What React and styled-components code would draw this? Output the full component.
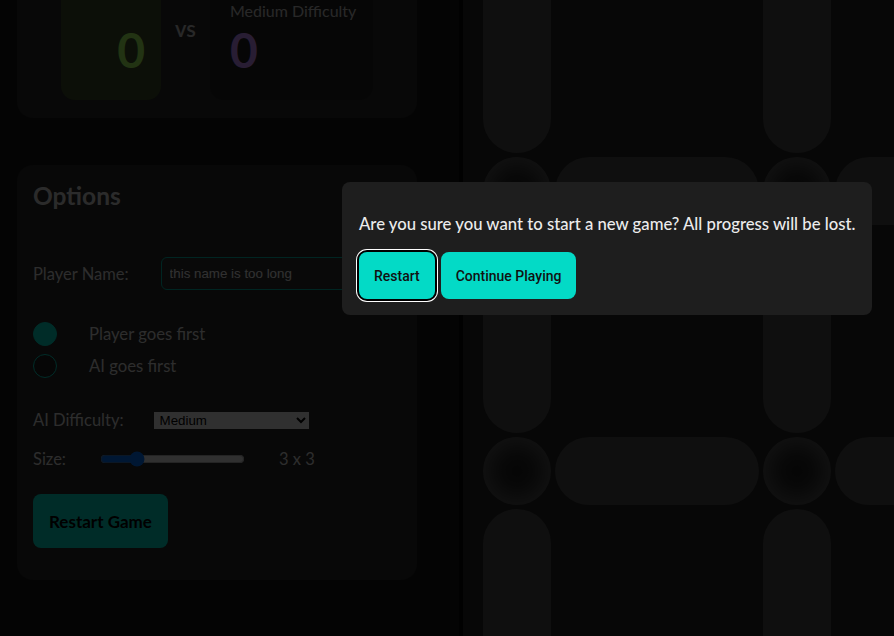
import React from 'react'
import styled, { createGlobalStyle } from 'styled-components'

// page is drawn a little scrolled, with the "new game?" confirm on top

const GlobalStyle = createGlobalStyle`
  html, body {
    margin: 0;
    padding: 0;
    background: #181818;
    overflow: hidden;
  }
  body {
    font-family: Lato, 'Open Sans', sans-serif;
    color: #dedede;
  }
`;

const TEAL = '#03dac6';

const Page = styled.div`
  display: flex;
  height: 636px;
  overflow: hidden;
`;

const Sidebar = styled.aside`
  width: 463px;
  flex-shrink: 0;
  box-sizing: border-box;
  padding: 0 17px;
  border-right: 4px solid #050505;
`;

const SideColumn = styled.div`
  display: flex;
  flex-direction: column;
  gap: 47px;
  margin-top: -37px;
`;

const Card = styled.section`
  width: 400px;
  box-sizing: border-box;
  background: #282828;
  border-radius: 16px;
`;

const ScoreCard = styled(Card)`
  display: flex;
  justify-content: center;
  align-items: flex-start;
  gap: 14px;
  padding: 18px 0;
`;

const ScoreBox = styled.div`
  width: ${p => p.$width}px;
  box-sizing: border-box;
  padding: 20px 16px 20px 20px;
  border-radius: 14px;
  background: ${p => p.$bg};
  text-align: ${p => p.$align};
`;

const ScoreLabel = styled.div`
  font-size: 16px;
  line-height: 19px;
  min-height: 19px;
  color: #c8c8c8;
  white-space: nowrap;
`;

const ScoreValue = styled.div`
  font-size: 48px;
  line-height: 60px;
  font-weight: 700;
  color: ${p => p.$color};
`;

const Versus = styled.div`
  margin-top: 34px;
  font-size: 22px;
  font-weight: 600;
  color: #c8c8c8;
`;

const OptionsCard = styled(Card)`
  display: flex;
  flex-direction: column;
  align-items: flex-start;
  padding: 16px 16px 32px;
`;

const Title = styled.h2`
  margin: 0 0 47px;
  font-size: 24.5px;
  line-height: 29px;
  font-weight: 700;
  color: #d6d6d6;
`;

const Row = styled.div`
  display: flex;
  align-items: center;
  gap: ${p => p.$gap || 32}px;
  height: ${p => p.$h || 24}px;
  margin-bottom: ${p => p.$mb || 0}px;
  font-size: 16.5px;
`;

const NameInput = styled.input`
  width: 200px;
  height: 33px;
  box-sizing: border-box;
  padding: 0 8px;
  border: 1px solid #02b8a8;
  border-radius: 6px;
  background: #2e2e2e;
  color: #f4f4f4;
  font: 13.33px 'Liberation Sans', Arial, sans-serif;
  outline: none;
`;

const RadioGroup = styled.div`
  display: flex;
  flex-direction: column;
  gap: 8px;
  margin-bottom: 30px;
`;

const RadioRow = styled.label`
  display: flex;
  align-items: center;
  gap: 32px;
  height: 24px;
  font-size: 16.7px;
`;

const RadioDot = styled.input.attrs({ type: 'radio' })`
  appearance: none;
  width: 24px;
  height: 24px;
  margin: 0;
  border-radius: 50%;
  box-sizing: border-box;
  border: 1px solid ${TEAL};
  background: #222;
  &:checked {
    background: ${TEAL};
  }
`;

const Select = styled.select`
  width: 155px;
  height: 17px;
  padding: 0 2px;
  border: none;
  border-radius: 0;
  background: #f0f0f0;
  color: #000;
  font: 13.33px 'Liberation Sans', Arial, sans-serif;
`;

const Range = styled.input.attrs({ type: 'range' })`
  width: 145px;
  margin: 0 2px;
`;

const MainButton = styled.button`
  height: 54px;
  padding: 0 16px;
  border: none;
  border-radius: 8px;
  background: ${TEAL};
  color: #000;
  font-family: Lato, sans-serif;
  font-size: 17px;
  font-weight: 700;
`;

const BoardArea = styled.main`
  flex: 1;
  background: #232323;
  overflow: hidden;
  padding-left: 20px;
`;

const Board = styled.div`
  display: grid;
  grid-template-columns: 68px 204px 68px 204px 68px 204px 68px;
  grid-template-rows: 68px 204px 68px 204px 68px 204px 68px;
  gap: 4px;
  margin-top: -123px;
`;

const Dot = styled.div`
  border-radius: 50%;
  background: radial-gradient(circle, #1e1e1e 0%, #2a2a2a 30%, #505050 72%, #5c5c5c 100%);
`;

const Edge = styled.div`
  border-radius: 34px;
  background: #4b4b4b;
`;

const Box = styled.div``;

const Overlay = styled.div`
  position: fixed;
  inset: 0;
  background: rgba(0, 0, 0, 0.8);
  z-index: 10;
`;

const Dialog = styled.div`
  position: fixed;
  left: 342px;
  top: 182px;
  z-index: 11;
  padding: 16px 17px 16px;
  border-radius: 8px;
  background: #1e1e1e;
  color: #ececec;
`;

const Message = styled.p`
  margin: 16px 0 18px;
  font-size: 16.7px;
  line-height: 20px;
  font-weight: 500;
  white-space: nowrap;
`;

const Actions = styled.div`
  display: flex;
  gap: 6px;
`;

const DialogButton = styled.button`
  height: 47px;
  padding: 0 15px;
  border: none;
  border-radius: 8px;
  background: ${TEAL};
  color: #111;
  font-family: Roboto, Arial, sans-serif;
  font-size: 14px;
  font-weight: 500;
  box-shadow: ${p => (p.$focused ? '0 0 0 2px #000, 0 0 0 3px #fff' : 'none')};
`;

const cellFor = (r, c) => {
  const key = `${r}-${c}`;
  if (r % 2 === 0 && c % 2 === 0) return <Dot key={key} />;
  if (r % 2 === 1 && c % 2 === 1) return <Box key={key} />;
  return <Edge key={key} />;
};

const App = () => {
  const cells = [];
  for (let r = 0; r < 7; r++) {
    for (let c = 0; c < 7; c++) cells.push(cellFor(r, c));
  }

  return (
    <>
      <GlobalStyle />
      <Page>
        <Sidebar>
          <SideColumn>
            <ScoreCard>
              <ScoreBox $width={100} $bg="#3c4b28" $align="right">
                <ScoreLabel />
                <ScoreValue $color="#a8ff60">0</ScoreValue>
              </ScoreBox>
              <Versus>vs</Versus>
              <ScoreBox $width={163} $bg="#202020" $align="left">
                <ScoreLabel>Medium Difficulty</ScoreLabel>
                <ScoreValue $color="#c790ff">0</ScoreValue>
              </ScoreBox>
            </ScoreCard>

            <OptionsCard>
              <Title>Options</Title>
              <Row $h={33} $mb={32}>
                <span>Player Name:</span>
                <NameInput defaultValue="this name is too long" />
              </Row>
              <RadioGroup>
                <RadioRow>
                  <RadioDot name="first" defaultChecked />
                  Player goes first
                </RadioRow>
                <RadioRow>
                  <RadioDot name="first" />
                  AI goes first
                </RadioRow>
              </RadioGroup>
              <Row $mb={15} $gap={30}>
                <span>AI Difficulty:</span>
                <Select defaultValue="medium">
                  <option value="easy">Easy</option>
                  <option value="medium">Medium</option>
                  <option value="hard">Hard</option>
                </Select>
              </Row>
              <Row $mb={23}>
                <span>Size:</span>
                <Range min={1} max={10} defaultValue={3} />
                <span>3 x 3</span>
              </Row>
              <MainButton>Restart Game</MainButton>
            </OptionsCard>
          </SideColumn>
        </Sidebar>

        <BoardArea>
          <Board>{cells}</Board>
        </BoardArea>
      </Page>

      <Overlay />
      <Dialog role="dialog">
        <Message>Are you sure you want to start a new game? All progress will be lost.</Message>
        <Actions>
          <DialogButton $focused>Restart</DialogButton>
          <DialogButton>Continue Playing</DialogButton>
        </Actions>
      </Dialog>
    </>
  );
};

export default App;
